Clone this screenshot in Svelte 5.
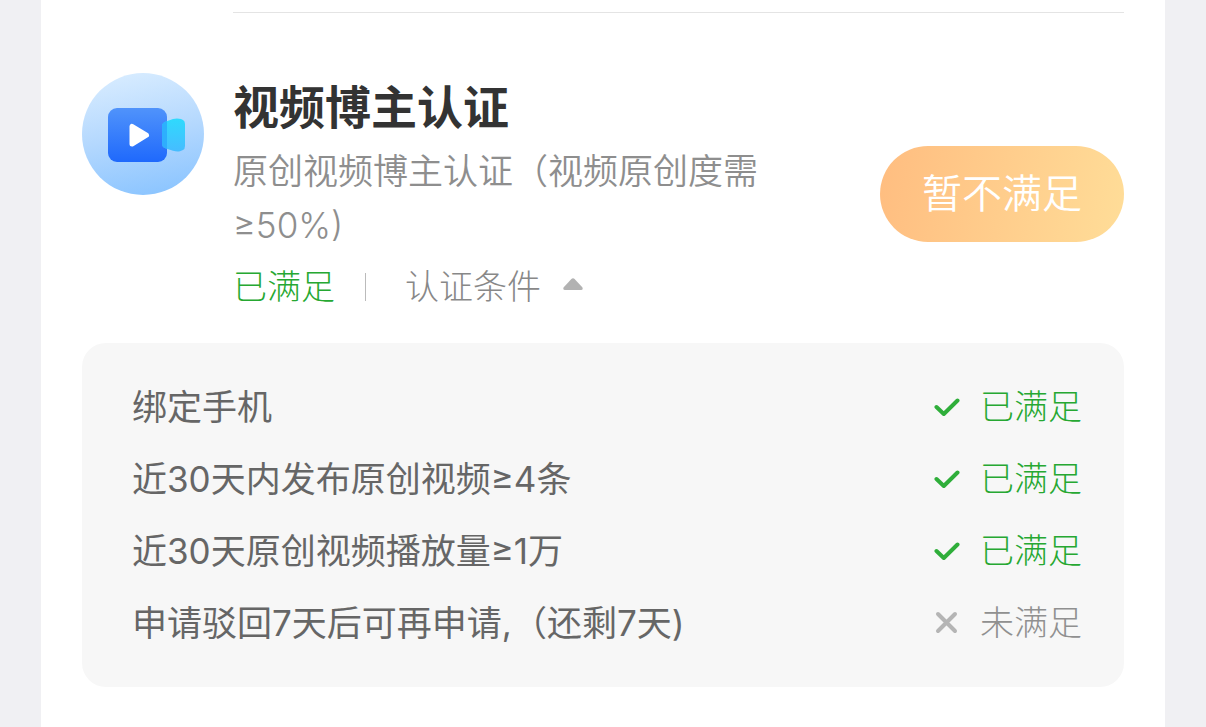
<script>
  let open = $state(true);

  const conditions = [
    { label: '绑定手机', met: true },
    { label: '近30天内发布原创视频≥4条', met: true },
    { label: '近30天原创视频播放量≥1万', met: true },
    { label: '申请驳回7天后可再申请,（还剩7天)', met: false }
  ];
</script>

<main class="page">
  <div class="panel">
    <hr class="divider" />

    <section class="item">
      <svg class="logo" viewBox="0 0 122 122" aria-hidden="true">
        <defs>
          <linearGradient id="disc" x1="0.4" y1="0" x2="0.6" y2="1">
            <stop offset="0" stop-color="#d6ebff" />
            <stop offset="0.5" stop-color="#b4d8fe" />
            <stop offset="1" stop-color="#8cc5ff" />
          </linearGradient>
          <linearGradient id="body" x1="0" y1="0" x2="0" y2="1">
            <stop offset="0" stop-color="#5093fb" />
            <stop offset="1" stop-color="#1f69fc" />
          </linearGradient>
          <linearGradient id="lens" x1="0" y1="0" x2="0" y2="1">
            <stop offset="0" stop-color="#2fdafd" />
            <stop offset="1" stop-color="#46bcff" />
          </linearGradient>
          <clipPath id="camera"><rect x="26" y="35" width="59" height="54" rx="9" /></clipPath>
        </defs>
        <circle cx="61" cy="61" r="61" fill="url(#disc)" />
        <rect x="26" y="35" width="59" height="54" rx="9" fill="url(#body)" />
        <path d="M84 48.500L91 46Q95 44.800 99 46L101 47Q103 48 103 51V73Q103 76 101 77L98 78.200Q95 79 91 77.800L84 75.500Q80 74.500 80 71V53Q80 49.500 84 48.500Z" fill="url(#lens)" />
        <path d="M84 48.500L94 45.800V78.300L84 75.500Q80 74.500 80 71V53Q80 49.500 84 48.500Z" fill="#2ba8fc" opacity="0.8" clip-path="url(#camera)" />
        <path d="M50 53.500V71L64.500 62.200Z" fill="#fff" stroke="#fff" stroke-width="5" stroke-linejoin="round" />
      </svg>

      <div class="info">
        <h2>视频博主认证</h2>
        <p class="desc">原创视频博主认证（视频原创度需≥50%)</p>
        <div class="status">
          <span class="met">已满足</span>
          <span class="bar"></span>
          <button class="toggle" type="button" aria-expanded={open} onclick={() => (open = !open)}>
            认证条件
            <svg class="caret" class:closed={!open} viewBox="0 0 20 12" aria-hidden="true">
              <path d="M8.400 1Q10 -0.400 11.600 1L19.300 9.300Q20.500 12 18 12H2Q-0.500 12 0.700 9.300Z" fill="#b2b2b2" />
            </svg>
          </button>
        </div>
      </div>

      <button class="apply" type="button">暂不满足</button>
    </section>

    {#if open}
      <ul class="conditions">
        {#each conditions as c}
          <li>
            <span class="label">{c.label}</span>
            <span class="result" class:met={c.met}>
              <svg class="mark" viewBox="0 0 26 26" aria-hidden="true">
                {#if c.met}
                  <path d="M2.500 13L9.800 20L23.500 6.500" />
                {:else}
                  <path d="M4 4L21 21M21 4L4 21" />
                {/if}
              </svg>
              {c.met ? '已满足' : '未满足'}
            </span>
          </li>
        {/each}
      </ul>
    {/if}
  </div>
</main>

<style>
  :global(body) {
    margin: 0;
    background: #f0f0f3;
  }

  .page {
    padding: 0 41px;
    font-family: Inter, 'Noto Sans CJK SC', sans-serif;
    font-size: 34px;
    line-height: 54px;
  }

  .panel {
    box-sizing: border-box;
    min-height: 100vh;
    padding: 12px 41px 40px;
    background: #fff;
  }

  .divider {
    height: 1px;
    margin: 0 0 60px 151px;
    border: 0;
    background: #e4e4e4;
  }

  .item {
    display: flex;
    align-items: center;
  }

  .logo {
    flex: none;
    align-self: flex-start;
    width: 122px;
    height: 122px;
    margin-right: 29px;
  }

  .info {
    flex: 1;
    padding-top: 7px;
  }

  h2 {
    margin: 0 0 10px;
    font-size: 46px;
    font-weight: 700;
    color: #333;
  }

  .desc {
    margin: 0 110px 8px 0;
    font-size: 35px;
    font-weight: 350;
    color: #8e8e8e;
  }

  .status {
    display: flex;
    align-items: center;
    font-weight: 300;
  }

  .bar {
    width: 1px;
    height: 28px;
    margin: 0 39px 0 30px;
    background: #bbb;
  }

  button {
    padding: 0;
    border: 0;
    background: none;
    font: inherit;
    cursor: pointer;
  }

  .toggle {
    display: flex;
    align-items: center;
    gap: 22px;
    color: #888;
  }

  .caret {
    width: 20px;
    height: 12px;
    margin-bottom: 6px;
  }

  .caret.closed {
    transform: rotate(180deg);
  }

  .apply {
    flex: none;
    padding: 21px 42px;
    border-radius: 48px;
    background: linear-gradient(100deg, #ffbd80, #ffdd98);
    font-size: 40px;
    font-weight: 350;
    color: #fff;
  }

  .conditions {
    margin: 29px 0 0;
    padding: 28px 42px 28px 50px;
    border-radius: 24px;
    background: #f7f7f7;
    list-style: none;
  }

  li {
    display: flex;
    align-items: center;
    justify-content: space-between;
    line-height: 72px;
  }

  .label {
    font-size: 35px;
    font-weight: 400;
    color: #666;
  }

  .result {
    display: flex;
    align-items: center;
    gap: 20px;
    font-weight: 300;
    color: #909090;
  }

  .met {
    color: #26a832;
  }

  .mark {
    width: 26px;
    height: 26px;
    fill: none;
    stroke: #b5b5b5;
    stroke-width: 4;
    stroke-linecap: round;
    stroke-linejoin: round;
  }

  .met .mark {
    stroke: #2fae3a;
  }
</style>
